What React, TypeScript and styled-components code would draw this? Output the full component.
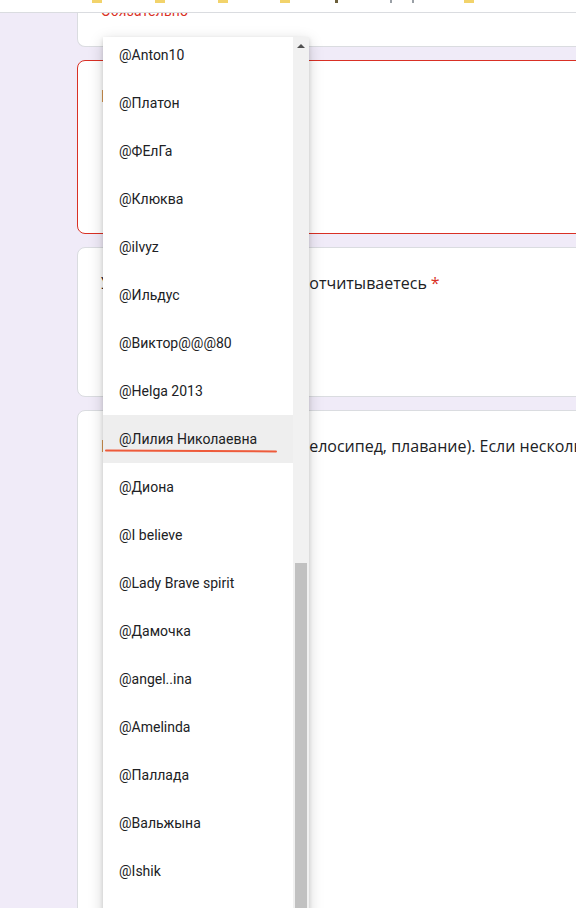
import React from "react";
import styled, { createGlobalStyle } from "styled-components";

const GlobalStyle = createGlobalStyle`
  html, body {
    margin: 0;
    padding: 0;
    overflow: hidden;
    background: #f0ebf8;
    font-family: Roboto, "Noto Sans", Arial, sans-serif;
  }
  * { box-sizing: border-box; }
`;

const Page = styled.div`
  position: relative;
  width: 576px;
  height: 908px;
  overflow: hidden;
  background: #f0ebf8;
`;

const TopBar = styled.div`
  position: relative;
  z-index: 2;
  height: 13px;
  background: #ffffff;
  border-bottom: 1px solid #dadce0;
  display: flex;
  align-items: flex-start;
`;

const Mark = styled.span<{ $ml: number; $w: number; $c: string }>`
  display: block;
  margin-left: ${(p) => p.$ml}px;
  width: ${(p) => p.$w}px;
  height: 3px;
  background: ${(p) => p.$c};
`;

const Column = styled.div`
  position: relative;
  z-index: 1;
  margin-left: 77px;
  margin-right: -30px;
  display: flex;
  flex-direction: column;
  gap: 13px;
`;

const Card = styled.div<{ $h: number; $error?: boolean; $topFlat?: boolean }>`
  height: ${(p) => p.$h}px;
  background: #ffffff;
  border: 1px solid ${(p) => (p.$error ? "#d93025" : "#dadce0")};
  border-radius: ${(p) => (p.$topFlat ? "0 0 8px 8px" : "8px")};
  ${(p) => (p.$topFlat ? "border-top: none; padding: 0 23px;" : "padding: 24px 23px;")}
  overflow: hidden;
`;

const Required = styled.div`
  margin-top: -10px;
  font-size: 14px;
  line-height: 17px;
  color: #d93025;
  letter-spacing: 0.2px;
`;

const Title = styled.div`
  font-family: "Open Sans", Roboto, sans-serif;
  font-size: 16px;
  line-height: 24px;
  color: #202124;
  white-space: nowrap;
  margin-top: -1px;
`;

const Star = styled.span`
  color: #d93025;
  margin-left: 4px;
`;

const Dropdown = styled.div`
  position: absolute;
  z-index: 5;
  left: 103px;
  top: 37px;
  width: 206px;
  height: 900px;
  background: #ffffff;
  box-shadow: 0 2px 4px rgba(0, 0, 0, 0.14), 0 4px 14px rgba(0, 0, 0, 0.18);
  display: flex;
  overflow: hidden;
`;

const List = styled.div`
  flex: 1;
  display: flex;
  flex-direction: column;
  margin-top: -6px;
`;

const Item = styled.div<{ $active?: boolean }>`
  position: relative;
  flex: 0 0 48px;
  height: 48px;
  display: flex;
  align-items: center;
  padding-left: 16px;
  font-size: 14px;
  color: #202124;
  background: ${(p) => (p.$active ? "#eeeeee" : "#ffffff")};
  white-space: nowrap;
`;

const Underline = styled.span`
  position: absolute;
  left: 2px;
  top: 35px;
  width: 172px;
  height: 2px;
  border-radius: 1px;
  background: #ee5b3b;
  transform: rotate(0.3deg);
`;

const ScrollBar = styled.div`
  flex: 0 0 16px;
  background: #f1f1f1;
  display: flex;
  flex-direction: column;
  align-items: center;
`;

const ArrowUp = styled.div`
  margin-top: 7px;
  width: 0;
  height: 0;
  border-left: 4px solid transparent;
  border-right: 4px solid transparent;
  border-bottom: 4px solid #505050;
`;

const Thumb = styled.div<{ $top: number }>`
  margin-top: ${(p) => p.$top}px;
  width: 12px;
  flex: 1;
  background: #c1c1c1;
`;

const names = [
  "@Anton10",
  "@Платон",
  "@ФЕлГа",
  "@Клюква",
  "@ilvyz",
  "@Ильдус",
  "@Виктор@@@80",
  "@Helga 2013",
  "@Лилия Николаевна",
  "@Диона",
  "@I believe",
  "@Lady Brave spirit",
  "@Дамочка",
  "@angel..ina",
  "@Amelinda",
  "@Паллада",
  "@Вальжына",
  "@Ishik",
  "@Nika",
];

const marks = [
  { ml: 92, w: 10, c: "#f2d36b" },
  { ml: 53, w: 10, c: "#f2d36b" },
  { ml: 53, w: 10, c: "#f2d36b" },
  { ml: 52, w: 10, c: "#f2d36b" },
  { ml: 45, w: 3, c: "#6b5f3a" },
  { ml: 52, w: 2, c: "#9aa0a6" },
  { ml: 20, w: 2, c: "#9aa0a6" },
  { ml: 50, w: 10, c: "#f2d36b" },
];

export default function App() {
  return (
    <Page>
      <GlobalStyle />
      <TopBar>
        {marks.map((m, i) => (
          <Mark key={i} $ml={m.ml} $w={m.w} $c={m.c} />
        ))}
      </TopBar>
      <Column>
        <Card $h={34} $topFlat>
          <Required>Обязательно</Required>
        </Card>
        <Card $h={174} $error>
          <Title>Ваш ник в группе</Title>
        </Card>
        <Card $h={150}>
          <Title>
            Укажите ник под которым отчитываетесь<Star>*</Star>
          </Title>
        </Card>
        <Card $h={600}>
          <Title>
            Ваши виды спорта (бег и велосипед, плавание). Если несколько
          </Title>
        </Card>
      </Column>
      <Dropdown>
        <List>
          {names.map((n, i) => (
            <Item key={n} $active={i === 8}>
              {n}
              {i === 8 && <Underline />}
            </Item>
          ))}
        </List>
        <ScrollBar>
          <ArrowUp />
          <Thumb $top={515} />
        </ScrollBar>
      </Dropdown>
    </Page>
  );
}
